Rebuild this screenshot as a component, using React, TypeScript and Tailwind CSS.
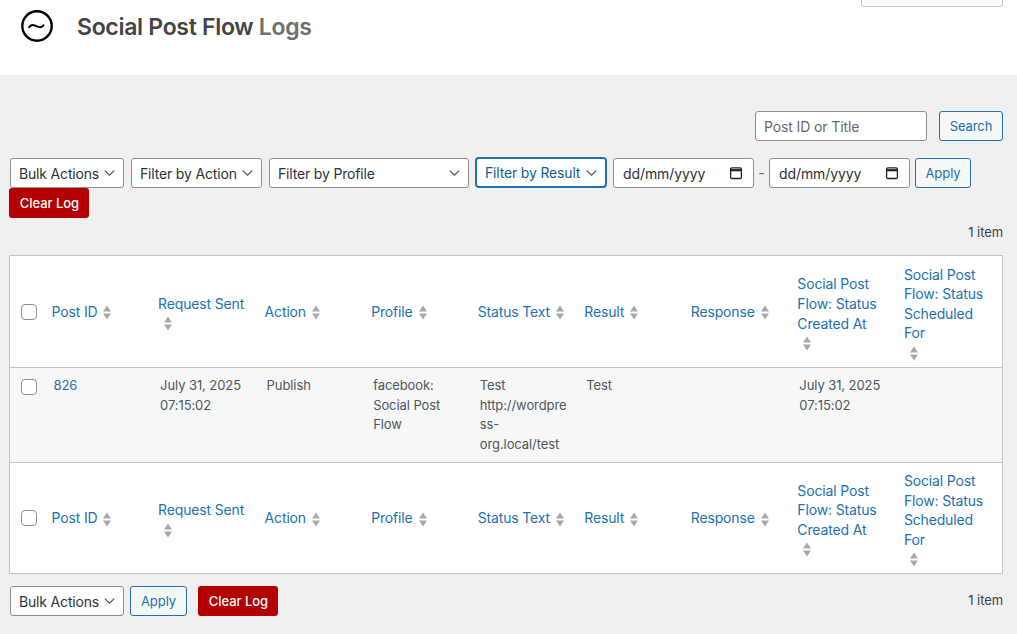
const labels = ["Post ID", "Request Sent", "Action", "Profile", "Status Text", "Result", "Response", "Social Post Flow: Status Created At", "Social Post Flow: Status Scheduled For"]

function Chevron() {
  return (
    <svg width="11" height="8" viewBox="0 0 11 8" fill="none" className="shrink-0 text-[#50575e]">
      <path d="M.8 1.600 5.500 6.100l4.700-4.500" stroke="currentColor" strokeWidth="1.200" />
    </svg>
  )
}

function SortIcon({ wrapped }: { wrapped: boolean }) {
  return (
    <svg width="8" height="15" viewBox="0 0 8 15" className={`inline-block align-middle ml-[6px] ${wrapped ? "-translate-y-px" : ""}`} fill="#a7aaad">
      <path d="M4 .5 8 6.500H0z" />
      <path d="M0 8.500h8l-4 6z" />
    </svg>
  )
}

function Select({ label, className }: { label: string; className: string }) {
  return (
    <div className={`h-[30px] flex items-center justify-between pl-[8px] pr-[8px] bg-white border border-[#8c8f94] rounded-[3px] text-[14px] tracking-[-0.17px] text-[#2c3338] ${className}`}>
      <span>{label}</span>
      <Chevron />
    </div>
  )
}

function DateBox() {
  return (
    <div className="w-[141px] h-[30px] flex items-center justify-between pl-[9px] pr-[10px] bg-white border border-[#8c8f94] rounded-[3px] text-[14px] tracking-[-0.1px] text-[#2c3338]">
      <span>dd/mm/yyyy</span>
      <svg width="14" height="14" viewBox="0 0 14 14" fill="none" stroke="#1d2327">
        <rect x="1.600" y="1.900" width="10.800" height="10.600" rx="1.200" strokeWidth="1.300" />
        <path d="M1.600 4.200h10.800" strokeWidth="2.200" />
      </svg>
    </div>
  )
}

function OutlineButton({ label, className }: { label: string; className: string }) {
  return (
    <button className={`h-[30px] pt-[1px] flex items-center justify-center bg-[#f6f7f7] border border-[#2271b1] rounded-[3px] text-[13px] text-[#2271b1] ${className}`}>
      {label}
    </button>
  )
}

function ClearButton({ className }: { className: string }) {
  return (
    <button className={`w-[80px] h-[30px] pt-[1px] pl-[1px] flex items-center justify-center bg-[#b30000] rounded-[3px] text-[13px] tracking-[-0.05px] font-medium text-white ${className}`}>
      Clear Log
    </button>
  )
}

function Checkbox() {
  return <input type="checkbox" className="appearance-none block w-[16px] h-[16px] bg-white border border-[#8c8f94] rounded-[4px] ml-[11px]" />
}

function HeadRow({ height }: { height: string }) {
  return (
    <tr className={height}>
      <td className="p-0 align-middle"><Checkbox /></td>
      {labels.map((label) => {
        const wrapped = label.length > 11
        return (
          <th key={label} className={`px-[8px] pb-0 align-middle text-left font-normal text-[14px] tracking-[-0.15px] leading-[19.6px] text-[#2271b1] ${wrapped ? "pt-[4px]" : "pt-0"}`}>
            {label}
            {label.length > 20 && <br />}
            <SortIcon wrapped={wrapped} />
          </th>
        )
      })}
    </tr>
  )
}

export default function App() {
  return (
    <div className="min-h-screen bg-[#f0f0f1] font-['Inter',sans-serif] text-[13px] tracking-[-0.08px] text-[#3c434a]">
      <header className="h-[75px] bg-white flex justify-between pl-[21px] pr-[14px]">
        <div className="flex items-start pt-[10px] gap-[24px]">
          <svg width="32" height="32" viewBox="0 0 32 32" fill="none" stroke="#000">
            <circle cx="16" cy="16" r="14.700" strokeWidth="2.400" />
            <path d="M7.500 18c1.600-2.600 3.600-3.600 6-2.700s4.200 2.500 6.500 1.800c1.400-.4 2.300-1.300 3-2.600" strokeWidth="1.800" />
          </svg>
          <h1 className="mt-[3px] text-[23px] leading-[28px] font-semibold tracking-[-0.3px] text-[#444]">
            Social Post Flow <span className="text-[#6f6f6f]">Logs</span>
          </h1>
        </div>
        <div className="w-[142px] h-[7px] bg-white border border-t-0 border-[#c3c4c7] rounded-b-[3px]" />
      </header>

      <main className="pl-[9px] pr-[14px]">
        <div className="pt-[36px] flex justify-end">
          <div className="w-[172px] h-[30px] flex items-center pl-[8px] bg-white border border-[#8c8f94] rounded-[3px] text-[14px] tracking-[-0.12px] text-[#646970]">Post ID or Title</div>
          <OutlineButton label="Search" className="w-[64px] ml-[12px]" />
        </div>

        <div className="mt-[16px] pl-[1px] flex items-end">
          <Select label="Bulk Actions" className="w-[114px]" />
          <Select label="Filter by Action" className="w-[131px] ml-[7px]" />
          <Select label="Filter by Profile" className="w-[200px] ml-[7px]" />
          <div className="w-[132px] h-[31px] ml-[6px] flex items-center justify-between pl-[8px] pr-[8px] bg-white border-2 border-[#2271b1] rounded-[4px] text-[14px] tracking-[-0.17px] text-[#135e96]">
            <span>Filter by Result</span>
            <Chevron />
          </div>
          <div className="ml-[6px]"><DateBox /></div>
          <span className="w-[15px] h-[30px] leading-[30px] text-center text-[14px] text-[#646970]">-</span>
          <DateBox />
          <OutlineButton label="Apply" className="w-[56px] ml-[5px]" />
        </div>
        <ClearButton className="" />

        <div className="mt-[6px] text-right leading-[16px]">1 item</div>

        <table className="mt-[15px] w-[994px] table-fixed border-collapse bg-white border border-[#c3c4c7]">
          <colgroup>
            <col className="w-[34px]" />
            {labels.map((label) => <col key={label} />)}
          </colgroup>
          <thead>
            <HeadRow height="h-[112px]" />
          </thead>
          <tbody>
            <tr className="bg-[#f6f7f7] border-y border-[#c3c4c7] align-top leading-[19.5px] text-[#50575e]">
              <td className="pt-[11px] p-0"><Checkbox /></td>
              <td className="px-[10px] py-[8px] text-[#2271b1]">826</td>
              <td className="px-[10px] py-[8px]">July 31, 2025 07:15:02</td>
              <td className="px-[10px] py-[8px]">Publish</td>
              <td className="px-[10px] py-[8px]">facebook: Social Post Flow</td>
              <td className="pl-[10px] pr-[8px] py-[8px] break-words">Test http://wordpress-org.local/test</td>
              <td className="px-[10px] py-[8px]">Test</td>
              <td className="px-[10px] py-[8px]"></td>
              <td className="px-[10px] py-[8px]">July 31, 2025 07:15:02</td>
              <td className="px-[10px] py-[8px]"></td>
            </tr>
          </tbody>
          <tfoot>
            <HeadRow height="h-[111px]" />
          </tfoot>
        </table>

        <div className="mt-[12px] pl-[1px] flex items-center">
          <Select label="Bulk Actions" className="w-[114px]" />
          <OutlineButton label="Apply" className="w-[57px] ml-[6px]" />
          <ClearButton className="ml-[11px]" />
          <span className="ml-auto">1 item</span>
        </div>
      </main>
    </div>
  )
}
